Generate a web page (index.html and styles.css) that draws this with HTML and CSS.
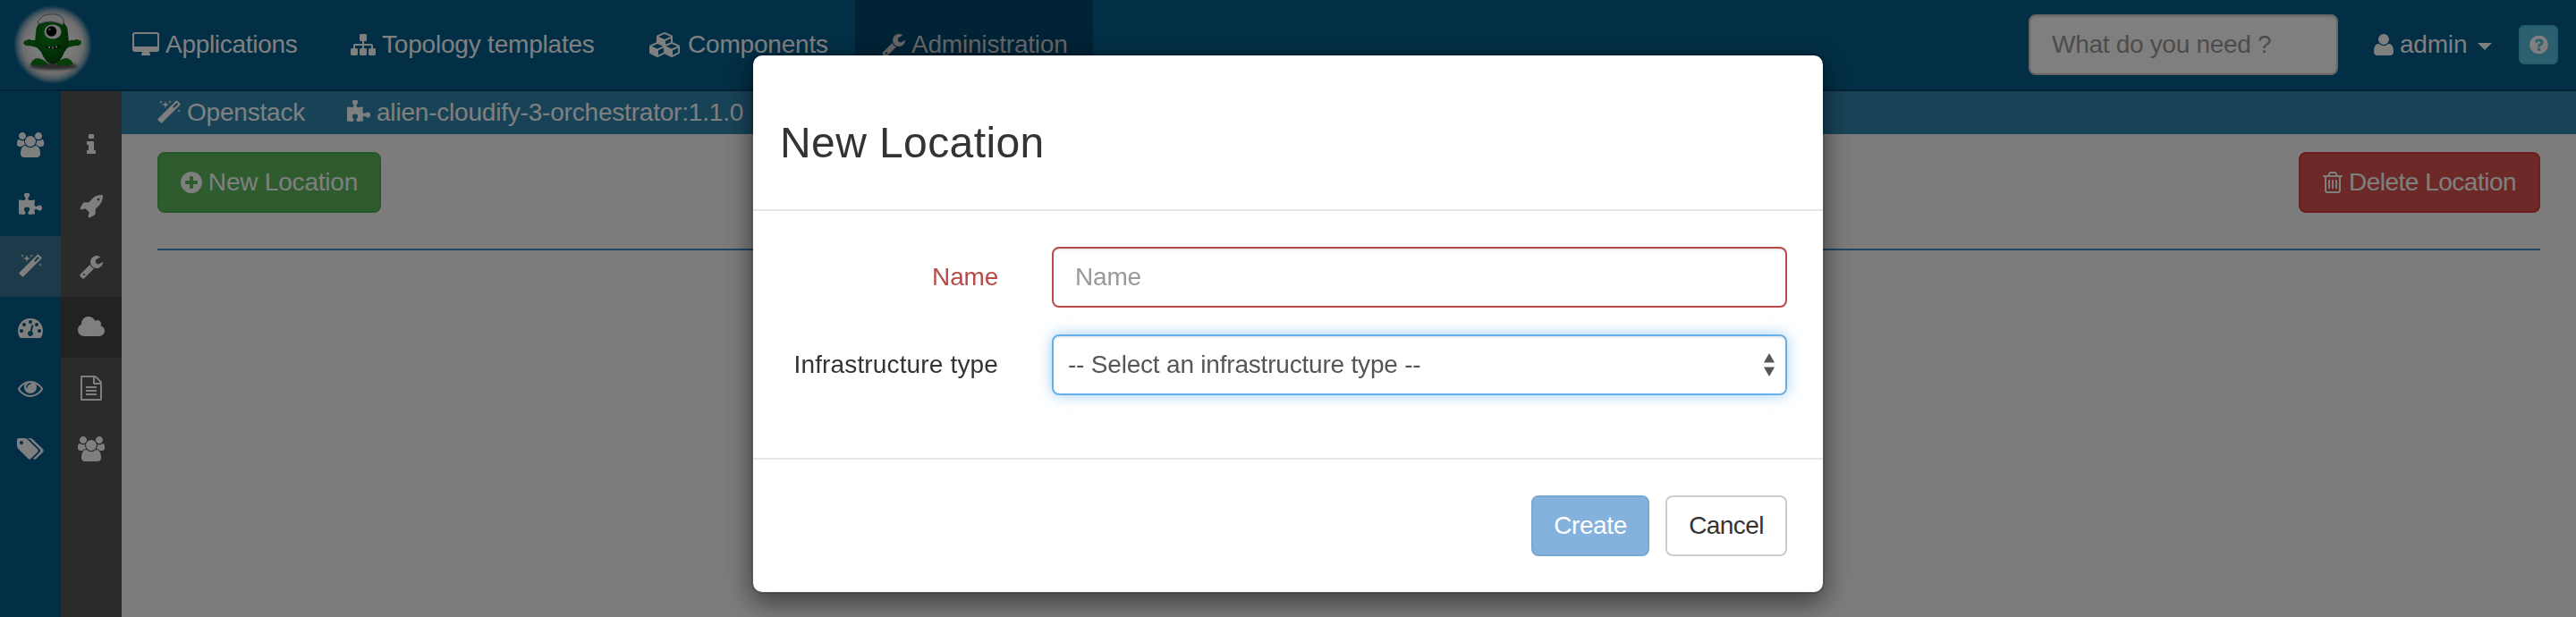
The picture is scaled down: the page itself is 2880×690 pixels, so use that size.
FILE: index.html
```html
<!DOCTYPE html>
<html lang="en">
<head>
<meta charset="utf-8">
<title>Alien 4 Cloud</title>
<link rel="stylesheet" href="styles.css">
</head>
<body>
<svg class="sprite" aria-hidden="true">
  <symbol id="i-desktop" viewBox="64 0 1920 1792"><path d="M1856 992v-832q0-13-9.500-22.500t-22.500-9.500h-1600q-13 0-22.500 9.500t-9.500 22.500v832q0 13 9.500 22.500t22.500 9.500h1600q13 0 22.500-9.500t9.500-22.500zm128-832v1088q0 66-47 113t-113 47h-544q0 37 16 77.500t32 71 16 43.500q0 26-19 45t-45 19h-512q-26 0-45-19t-19-45q0-14 16-44t32-70 16-78h-544q-66 0-113-47t-47-113v-1088q0-66 47-113t113-47h1600q66 0 113 47t47 113z"/></symbol>
  <symbol id="i-sitemap" viewBox="0 0 1792 1792"><path d="M1792 1248v320q0 40-28 68t-68 28h-320q-40 0-68-28t-28-68v-320q0-40 28-68t68-28h96v-192h-512v192h96q40 0 68 28t28 68v320q0 40-28 68t-68 28h-320q-40 0-68-28t-28-68v-320q0-40 28-68t68-28h96v-192h-512v192h96q40 0 68 28t28 68v320q0 40-28 68t-68 28h-320q-40 0-68-28t-28-68v-320q0-40 28-68t68-28h96v-192q0-52 38-90t90-38h512v-192h-96q-40 0-68-28t-28-68v-320q0-40 28-68t68-28h320q40 0 68 28t28 68v320q0 40-28 68t-68 28h-96v192h512q52 0 90 38t38 90v192h96q40 0 68 28t28 68z"/></symbol>
  <symbol id="i-cubes" viewBox="0 0 2304 1792"><path d="M640 1632l384-192v-314l-384 164v342zm-64-454l404-173-404-173-404 173zm1088 454l384-192v-314l-384 164v342zm-64-454l404-173-404-173-404 173zm-448-293l384-165v-266l-384 164v267zm-64-379l441-189-441-189-441 189zm1088 518v416q0 36-19 67t-52 47l-448 224q-25 14-57 14t-57-14l-448-224q-4-2-7-4-2 2-7 4l-448 224q-25 14-57 14t-57-14l-448-224q-33-16-52-47t-19-67v-416q0-38 21.500-70t56.500-48l434-186v-400q0-38 21.500-70t56.500-48l448-192q23-10 50-10t50 10l448 192q35 16 56.500 48t21.500 70v400l434 186q36 16 57 48t21 70z"/></symbol>
  <symbol id="i-wrench" viewBox="64 0 1664 1792"><path d="M448 1472q0-26-19-45t-45-19-45 19-19 45 19 45 45 19 45-19 19-45zm644-420l-682 682q-37 37-90 37-52 0-91-37l-106-108q-38-36-38-90 0-53 38-91l681-681q39 98 114.500 173.500t173.500 114.500zm634-435q0 39-23 106-47 134-164.500 217.500t-258.500 83.500q-185 0-316.500-131.500t-131.500-316.500 131.500-316.500 316.500-131.500q58 0 121.500 16.500t107.500 46.500q16 11 16 28t-16 28l-293 169v224l193 107q5-3 79-48.500t135.500-81 70.500-35.500q15 0 23.500 10t8.500 25z"/></symbol>
  <symbol id="i-magic" viewBox="64 0 1664 1792"><path d="M1254 581l293-293-107-107-293 293zm447-293q0 27-18 45l-1286 1286q-18 18-45 18t-45-18l-198-198q-18-18-18-45t18-45l1286-1286q18-18 45-18t45 18l198 198q18 18 18 45zm-1351-190l98 30-98 30-30 98-30-98-98-30 98-30 30-98zm350 162l196 60-196 60-60 196-60-196-196-60 196-60 60-196zm930 478l98 30-98 30-30 98-30-98-98-30 98-30 30-98zm-640-640l98 30-98 30-30 98-30-98-98-30 98-30 30-98z"/></symbol>
  <symbol id="i-puzzle" viewBox="90 0 1664 1792"><path d="M1755 1060q0 81-44.500 135t-123.500 54q-41 0-77.500-17.500t-59-38-56.500-38-71-17.500q-110 0-110 124 0 39 16 115t15 115v5q-22 0-33 1-34 3-97.500 11.500t-115.500 13.500-98 5q-61 0-103-26.500t-42-83.500q0-37 17.500-71t38-56.500 38-59 17.500-77.500q0-79-54-123.500t-135-44.500q-84 0-143 45.500t-59 127.500q0 43 15 83t33.500 64.500 33.500 53 15 50.500q0 45-46 89-37 35-117 35-95 0-245-24-9-2-27.500-4t-27.500-4l-13-2q-1 0-3-1-2 0-2-1v-1024q2 1 17.500 3.500t34 5 21.500 3.500q150 24 245 24 80 0 117-35 46-44 46-89 0-22-15-50.500t-33.500-53-33.500-64.500-15-83q0-82 59-127.500t144-45.500q80 0 134 44.500t54 123.500q0 41-17.500 77.500t-38 59-38 56.500-17.500 71q0 57 42 83.500t103 26.500q64 0 180-15t163-17v2q-1 2-3.500 17.500t-5 34-3.500 21.500q-24 150-24 245 0 80 35 117 44 46 89 46 22 0 50.500-15t53-33.500 64.500-33.500 83-15q82 0 127.500 59t45.500 143z"/></symbol>
  <symbol id="i-user" viewBox="192 0 1408 1792"><path d="M1600 1405q0 120-73 189.500t-194 69.500h-874q-121 0-194-69.500t-73-189.500q0-53 3.500-103.500t14-109 26.500-108.500 43-97.500 62-81 85.500-53.500 111.500-20q9 0 42 21.500t74.500 48 108 48 133.500 21.500 133.500-21.500 108-48 74.500-48 42-21.500q61 0 111.500 20t85.500 53.500 62 81 43 97.500 26.500 108.500 14 109 3.500 103.500zm-320-893q0 159-112.500 271.500t-271.500 112.500-271.500-112.500-112.500-271.500 112.500-271.500 271.500-112.500 271.500 112.500 112.500 271.500z"/></symbol>
  <symbol id="i-question" viewBox="128 0 1536 1792"><path d="M1024 1376v-192q0-14-9-23t-23-9h-192q-14 0-23 9t-9 23v192q0 14 9 23t23 9h192q14 0 23-9t9-23zm256-672q0-88-55.500-163t-138.500-116-170-41q-243 0-371 213-15 24 8 42l132 100q7 6 19 6 16 0 25-12 53-68 86-92 34-24 86-24 48 0 85.500 26t37.500 59q0 38-20 61t-68 45q-63 28-115.500 86.500t-52.500 125.500v36q0 14 9 23t23 9h192q14 0 23-9t9-23q0-19 21.500-49.500t54.500-49.500q32-18 49-28.500t46-35 44.500-48 28-60.500 12.500-81zm384 192q0 209-103 385.500t-279.500 279.500-385.500 103-385.500-103-279.500-279.500-103-385.500 103-385.500 279.500-279.500 385.500-103 385.500 103 279.500 279.500 103 385.500z"/></symbol>
  <symbol id="i-plus" viewBox="128 0 1536 1792"><path d="M1344 960v-128q0-26-19-45t-45-19h-256v-256q0-26-19-45t-45-19h-128q-26 0-45 19t-19 45v256h-256q-26 0-45 19t-19 45v128q0 26 19 45t45 19h256v256q0 26 19 45t45 19h128q26 0 45-19t19-45v-256h256q26 0 45-19t19-45zm320-64q0 209-103 385.500t-279.500 279.500-385.500 103-385.500-103-279.500-279.500-103-385.500 103-385.500 279.500-279.500 385.500-103 385.500 103 279.500 279.500 103 385.500z"/></symbol>
  <symbol id="i-trash" viewBox="192 0 1408 1792"><path d="M704 736v576q0 14-9 23t-23 9h-64q-14 0-23-9t-9-23v-576q0-14 9-23t23-9h64q14 0 23 9t9 23zm256 0v576q0 14-9 23t-23 9h-64q-14 0-23-9t-9-23v-576q0-14 9-23t23-9h64q14 0 23 9t9 23zm256 0v576q0 14-9 23t-23 9h-64q-14 0-23-9t-9-23v-576q0-14 9-23t23-9h64q14 0 23 9t9 23zm128 724v-948h-896v948q0 22 7 40.500t14.500 27 10.500 8.500h832q3 0 10.500-8.500t14.500-27 7-40.500zm-672-1076h448l-48-117q-7-9-17-11h-317q-10 2-17 11zm928 32v64q0 14-9 23t-23 9h-96v948q0 83-47 143.500t-113 60.500h-832q-66 0-113-58.500t-47-141.500v-952h-96q-14 0-23-9t-9-23v-64q0-14 9-23t23-9h309l70-167q15-37 54-63t79-26h320q40 0 79 26t54 63l70 167h309q14 0 23 9t9 23z"/></symbol>
  <symbol id="i-users" viewBox="-64 0 1920 1792"><path d="M529 896q-162 5-265 128h-134q-82 0-138-40.500t-56-118.500q0-353 124-353 6 0 43.500 21t97.500 42.500 119 21.500q67 0 133-23-5 37-5 66 0 159 93 256zm1071 637q0 120-73 189.500t-194 69.500h-874q-121 0-194-69.500t-73-189.500q0-53 3.500-103.500t14-109 26.500-108.500 43-97.500 62-81 85.500-53.500 111.500-20q10 0 43 21.500t73 48 107 48 135 21.500 135-21.500 107-48 73-48 43-21.500q61 0 111.500 20t85.500 53.500 62 81 43 97.500 26.500 108.500 14 109 3.500 103.500zm-1024-1277q0 106-75 181t-181 75-181-75-75-181 75-181 181-75 181 75 75 181zm704 384q0 159-112.500 271.500t-271.500 112.500-271.500-112.500-112.500-271.500 112.500-271.500 271.500-112.500 271.500 112.500 112.500 271.500zm576 225q0 78-56 118.500t-138 40.500h-134q-103-123-265-128 93-97 93-256 0-29-5-66 66 23 133 23 59 0 119-21.500t97.500-42.500 43.500-21q124 0 124 353zm-128-609q0 106-75 181t-181 75-181-75-75-181 75-181 181-75 181 75 75 181z"/></symbol>
  <symbol id="i-gauge" viewBox="0 0 1792 1792"><path d="M384 1152q0-53-37.500-90.500t-90.500-37.500-90.500 37.500-37.500 90.500 37.500 90.500 90.500 37.500 90.500-37.500 37.500-90.500zm192-448q0-53-37.500-90.500t-90.500-37.500-90.500 37.500-37.500 90.500 37.500 90.500 90.500 37.500 90.500-37.500 37.500-90.500zm428 481l101-382q6-26-7.500-48.500t-38.500-29.500-48 6.500-30 39.500l-101 382q-60 5-107 43.500t-63 98.500q-20 77 20 146t117 89 146-20 89-117q16-60-6-117t-72-91zm660-33q0-53-37.500-90.500t-90.500-37.500-90.500 37.500-37.500 90.500 37.500 90.500 90.500 37.500 90.500-37.500 37.500-90.500zm-640-640q0-53-37.500-90.500t-90.500-37.500-90.500 37.500-37.500 90.500 37.500 90.500 90.500 37.500 90.500-37.500 37.500-90.500zm448 192q0-53-37.500-90.500t-90.500-37.500-90.500 37.500-37.500 90.500 37.500 90.500 90.500 37.500 90.500-37.500 37.500-90.500zm320 448q0 261-141 483-19 29-54 29h-1402q-35 0-54-29-141-221-141-483 0-182 71-348t191-286 286-191 348-71 348 71 286 191 191 286 71 348z"/></symbol>
  <symbol id="i-eye" viewBox="0 0 1792 1792"><path d="M1664 960q-152-236-381-353 61 104 61 225 0 185-131.500 316.500t-316.500 131.500-316.500-131.500-131.500-316.500q0-121 61-225-229 117-381 353 133 205 333.500 326.500t434.500 121.500 434.500-121.500 333.500-326.500zm-720-384q0-20-14-34t-34-14q-125 0-214.500 89.500t-89.500 214.500q0 20 14 34t34 14 34-14 14-34q0-86 61-147t147-61q20 0 34-14t14-34zm848 384q0 34-20 69-140 230-376.500 368.500t-499.500 138.500-499.500-139-376.500-368q-20-35-20-69t20-69q140-229 376.500-368t499.500-139 499.500 139 376.500 368q20 35 20 69z"/></symbol>
  <symbol id="i-tags" viewBox="0 0 1920 1792"><path d="M448 448q0-53-37.500-90.500t-90.500-37.500-90.500 37.500-37.500 90.500 37.500 90.500 90.500 37.500 90.500-37.500 37.500-90.500zm1067 576q0 53-37 90l-491 492q-39 37-91 37-53 0-90-37l-715-716q-38-37-64.500-101t-26.500-117v-416q0-52 38-90t90-38h416q53 0 117 26.500t102 64.500l715 714q37 39 37 91zm384 0q0 53-37 90l-491 492q-39 37-91 37-36 0-59-14t-53-45l470-470q37-37 37-90 0-52-37-91l-715-714q-38-38-102-64.500t-117-26.500h224q53 0 117 26.500t102 64.500l715 714q37 39 37 91z"/></symbol>
  <symbol id="i-info" viewBox="576 0 640 1792"><path d="M1216 1344v128q0 26-19 45t-45 19h-512q-26 0-45-19t-19-45v-128q0-26 19-45t45-19h64v-384h-64q-26 0-45-19t-19-45v-128q0-26 19-45t45-19h384q26 0 45 19t19 45v576h64q26 0 45 19t19 45zm-128-1152v192q0 26-19 45t-45 19h-256q-26 0-45-19t-19-45v-192q0-26 19-45t45-19h256q26 0 45 19t19 45z"/></symbol>
  <symbol id="i-rocket" viewBox="0 0 1664 1792"><path d="M1440 448q0-40-28-68t-68-28-68 28-28 68 28 68 68 28 68-28 28-68zm224-288q0 249-75.500 430.500t-253.500 360.500q-81 80-195 176l-20 379q-2 16-16 26l-384 224q-7 4-16 4-12 0-23-9l-64-64q-13-14-8-32l85-276-281-281-276 85q-3 1-9 1-14 0-23-9l-64-64q-17-19-5-39l224-384q10-14 26-16l379-20q96-114 176-195 188-187 358-258t431-71q14 0 24 9.500t10 22.500z"/></symbol>
  <symbol id="i-cloud" viewBox="64 0 1920 1792"><path d="M1984 1152q0 159-112.500 271.500t-271.500 112.500h-1088q-185 0-316.500-131.500t-131.500-316.500q0-132 71-241.500t187-163.500q-2-28-2-43 0-212 150-362t362-150q158 0 286.500 88t187.500 230q70-62 166-62 106 0 181 75t75 181q0 75-41 138 129 30 213 134.500t84 239.500z"/></symbol>
  <symbol id="i-file" viewBox="128 0 1536 1792"><path d="M1596 380q28 28 48 76t20 88v1152q0 40-28 68t-68 28h-1344q-40 0-68-28t-28-68v-1600q0-40 28-68t68-28h896q40 0 88 20t76 48zm-444-244v376h376q-10-29-22-41l-313-313q-12-12-41-22zm384 1528v-1024h-416q-40 0-68-28t-28-68v-416h-768v1536h1280zm-1024-864q0-14 9-23t23-9h704q14 0 23 9t9 23v64q0 14-9 23t-23 9h-704q-14 0-23-9t-9-23v-64zm736 224q14 0 23 9t9 23v64q0 14-9 23t-23 9h-704q-14 0-23-9t-9-23v-64q0-14 9-23t23-9h704zm0 256q14 0 23 9t9 23v64q0 14-9 23t-23 9h-704q-14 0-23-9t-9-23v-64q0-14 9-23t23-9h704z"/></symbol>
</svg>

<header class="navbar">
  <a class="brand">
    <svg width="90" height="90" viewBox="0 0 90 90">
      <defs>
        <radialGradient id="glow">
          <stop offset="0" stop-color="#fff"/>
          <stop offset=".5" stop-color="#f4f4f4"/>
          <stop offset=".76" stop-color="#dcdcdc"/>
          <stop offset=".88" stop-color="#d0d4d8" stop-opacity=".65"/>
          <stop offset="1" stop-color="#c0ccd4" stop-opacity="0"/>
        </radialGradient>
        <radialGradient id="skin" cx=".4" cy=".3" r=".75">
          <stop offset="0" stop-color="#0a8a14"/>
          <stop offset=".6" stop-color="#06640c"/>
          <stop offset="1" stop-color="#034208"/>
        </radialGradient>
        <filter id="soft" x="-20%" y="-100%" width="140%" height="300%"><feGaussianBlur stdDeviation="1.600"/></filter>
      </defs>
      <circle cx="45" cy="45" r="44" fill="url(#glow)"/>
      <ellipse cx="46" cy="69" rx="27" ry="4" fill="#555" filter="url(#soft)"/>
      <path d="M20 67q2-6 8-7 7 1 11 6l-1 2H21zM68 67q-2-6-8-7-7 1-11 6l1 2h13z" fill="#0c7c16"/>
      <path d="M29 44q-3-5-8-4-3-2-5 0-3 0-4 3 2 4 7 3 6 1 12 4zM60 44q3-5 9-4 3-2 5 0 3 0 3 3-2 4-7 3-6 1-12 4z" fill="#0a7212"/>
      <path d="M26 32q0-11 8-13 10-3 20 0 8 3 8 13l1 10q-1 7-5 11-4 12-13 14-9-2-13-14-5-4-7-11z" fill="url(#skin)"/>
      <path d="M29 22q-2-4 2-6 3-5 12-5 11-1 14 6 1 3-1 6-12-7-27-1z" fill="#e4e4e4" stroke="#6a7890" stroke-width="1"/>
      <ellipse cx="45" cy="30.500" rx="9.500" ry="8" fill="#f0f0f0"/>
      <circle cx="43.500" cy="30" r="5.800" fill="#000"/>
      <circle cx="41.500" cy="28" r="1.200" fill="#999"/>
      <path d="M36 46q9 3 18-1-1 5-8.500 5-8.500 0-9.500-4z" fill="#012503"/>
      <path d="M40 47h2v2h-2zM44 47.500h2v2h-2zM48 46.500h2v2h-2z" fill="#ccc"/>
    </svg>
  </a>
  <nav class="menu">
    <a class="menu-item menu-item--apps"><svg class="icon w30"><use href="#i-desktop"/></svg><span>Applications</span></a>
    <a class="menu-item menu-item--topo"><svg class="icon w28"><use href="#i-sitemap"/></svg><span>Topology templates</span></a>
    <a class="menu-item menu-item--comp"><svg class="icon w36"><use href="#i-cubes"/></svg><span>Components</span></a>
    <a class="menu-item menu-item--admin"><svg class="icon w26"><use href="#i-wrench"/></svg><span>Administration</span></a>
  </nav>
  <input class="control search" type="text" placeholder="What do you need ?">
  <a class="account"><svg class="icon w22"><use href="#i-user"/></svg><span>admin</span><i class="caret"></i></a>
  <button class="help"><svg class="help-icon"><use href="#i-question"/></svg></button>
</header>

<div class="page">
  <aside class="side side--main">
    <a class="side-item"><svg class="icon w30"><use href="#i-users"/></svg></a>
    <a class="side-item"><svg class="icon w26"><use href="#i-puzzle"/></svg></a>
    <a class="side-item side-item--on"><svg class="icon w26"><use href="#i-magic"/></svg></a>
    <a class="side-item"><svg class="icon w28"><use href="#i-gauge"/></svg></a>
    <a class="side-item"><svg class="icon w28"><use href="#i-eye"/></svg></a>
    <a class="side-item"><svg class="icon w30"><use href="#i-tags"/></svg></a>
  </aside>
  <aside class="side side--sub">
    <a class="side-item"><svg class="icon w10"><use href="#i-info"/></svg></a>
    <a class="side-item"><svg class="icon w26"><use href="#i-rocket"/></svg></a>
    <a class="side-item"><svg class="icon w26"><use href="#i-wrench"/></svg></a>
    <a class="side-item side-item--on"><svg class="icon w30"><use href="#i-cloud"/></svg></a>
    <a class="side-item"><svg class="icon w24"><use href="#i-file"/></svg></a>
    <a class="side-item"><svg class="icon w30"><use href="#i-users"/></svg></a>
  </aside>
  <main class="main">
    <div class="crumbs">
      <a class="crumb crumb--first"><svg class="icon w26"><use href="#i-magic"/></svg><span>Openstack</span></a>
      <a class="crumb"><svg class="icon w26"><use href="#i-puzzle"/></svg><span>alien-cloudify-3-orchestrator:1.1.0</span></a>
    </div>
    <div class="toolbar">
      <button class="btn btn--success"><svg class="icon w24"><use href="#i-plus"/></svg><span>New Location</span></button>
      <button class="btn btn--danger"><svg class="icon w22"><use href="#i-trash"/></svg><span>Delete Location</span></button>
    </div>
  </main>
</div>

<div class="backdrop">
  <form class="modal">
    <div class="modal-head"><h3 class="modal-title">New Location</h3></div>
    <div class="modal-body">
      <label class="label label--error" for="name">Name</label>
      <input class="control control--error" id="name" type="text" placeholder="Name">
      <label class="label" for="infra">Infrastructure type</label>
      <div class="control control--focus" id="infra">
        <span class="select-value">-- Select an infrastructure type --</span>
        <svg class="arrows" viewBox="0 0 12 26"><path d="M6 0l6 10.500H0zM6 26l6-10.500H0z"/></svg>
      </div>
    </div>
    <div class="modal-foot">
      <button class="btn btn--primary" type="button">Create</button>
      <button class="btn btn--default" type="button">Cancel</button>
    </div>
  </form>
</div>
</body>
</html>
```
FILE: styles.css
```css
* {
  box-sizing: border-box;
}

body {
  margin: 0;
  height: 690px;
  overflow: hidden;
  display: flex;
  flex-direction: column;
  background: #f8f8f8;
  color: #333;
  font: 28px/40px "Liberation Sans", Arial, sans-serif;
  letter-spacing: -0.2px;
}

input,
button {
  font: inherit;
  letter-spacing: inherit;
}

.sprite {
  position: absolute;
  width: 0;
  height: 0;
}

.icon {
  flex: none;
  height: 28px;
  fill: currentColor;
}

.w10 { width: 10px; }
.w22 { width: 22px; }
.w24 { width: 24px; }
.w26 { width: 26px; }
.w28 { width: 28px; }
.w30 { width: 30px; }
.w36 { width: 36px; }

/* top bar */
.navbar {
  flex: none;
  display: flex;
  align-items: center;
  height: 102px;
  padding-right: 20px;
  border-bottom: 2px solid #004466;
  background: #045e8c;
  color: #fff;
}

.brand {
  width: 118px;
  height: 90px;
  padding-left: 14px;
}

.menu {
  display: flex;
  flex: 1;
  height: 100px;
}

.menu-item {
  display: flex;
  align-items: center;
  gap: 7px;
  padding-left: 30px;
  white-space: nowrap;
}

.menu-item--apps {
  width: 244px;
  letter-spacing: -0.3px;
}

.menu-item--topo { width: 334px; }
.menu-item--comp { width: 260px; }

.menu-item--admin {
  width: 266px;
  background: #00466c;
  color: #ccc;
}

.account {
  display: flex;
  align-items: center;
  gap: 7px;
  width: 202px;
  padding-left: 40px;
}

.caret {
  margin: 4px 0 0 5px;
  border: 8px solid transparent;
  border-top-color: currentColor;
  border-bottom: 0;
}

.help {
  display: flex;
  align-items: center;
  justify-content: center;
  width: 44px;
  height: 44px;
  padding: 0;
  border: 2px solid #46b8da;
  border-radius: 6px;
  background: #5bc0de;
  color: #fff;
}

.help-icon {
  width: 21px;
  height: 24px;
  fill: currentColor;
}

/* form controls */
.control {
  display: flex;
  align-items: center;
  height: 68px;
  padding: 0 24px;
  border: 2px solid #ccc;
  border-radius: 8px;
  background: #fff;
  box-shadow: inset 0 2px 2px rgba(0, 0, 0, .075);
  color: #555;
  outline: 0;
}

.control::placeholder {
  color: #999;
  opacity: 1;
}

.search {
  width: 346px;
  letter-spacing: -0.3px;
}

.control--error {
  border-color: #b94a48;
}

.control--focus {
  padding: 0 12px 0 16px;
  border-color: #66afe9;
  box-shadow: inset 0 2px 2px rgba(0, 0, 0, .075), 0 0 16px rgba(102, 175, 233, .6);
}

.select-value {
  flex: 1;
}

.arrows {
  width: 12px;
  height: 26px;
  fill: #555;
}

/* side menus */
.page {
  flex: 1;
  display: flex;
}

.side {
  flex: none;
  width: 68px;
  padding-top: 26px;
  color: #fff;
}

.side--main { background: #045e8c; }
.side--sub { background: #575757; }

.side-item {
  display: flex;
  align-items: center;
  justify-content: center;
  height: 68px;
  border-bottom: 1px solid rgba(0, 0, 0, .06);
  padding-top: 1px;
}

.side--main .side-item--on { background: #387494; }
.side--sub .side-item--on { background: #444; }

/* content */
.main {
  flex: 1;
}

.crumbs {
  display: flex;
  align-items: center;
  height: 48px;
  padding: 0 0 0 40px;
  background: #3187af;
  color: #fff;
}

.crumb {
  display: flex;
  align-items: center;
  gap: 7px;
}

.crumb--first {
  width: 212px;
}

.toolbar {
  display: flex;
  justify-content: space-between;
  height: 110px;
  margin: 20px 40px 0;
  border-bottom: 2px solid #428bca;
}

.btn {
  display: flex;
  align-items: center;
  justify-content: center;
  gap: 7px;
  height: 68px;
  padding: 0;
  border: 2px solid transparent;
  border-radius: 8px;
  white-space: nowrap;
  color: #fff;
}

.btn--success {
  width: 250px;
  border-color: #4cae4c;
  background: #5cb85c;
}

.btn--danger {
  width: 270px;
  border-color: #d43f3a;
  background: #d9534f;
  letter-spacing: -0.5px;
}

.btn--primary {
  width: 132px;
  border-color: #78a9d5;
  background: #85b2dc;
  letter-spacing: -0.4px;
}

.btn--default {
  width: 136px;
  border-color: #ccc;
  background: #fff;
  color: #333;
  letter-spacing: -0.6px;
}

/* dialog */
.backdrop {
  position: fixed;
  inset: 0;
  display: flex;
  justify-content: center;
  align-items: flex-start;
  padding-top: 60px;
  background: rgba(0, 0, 0, .5);
}

.modal {
  width: 1200px;
  height: 604px;
  border: 2px solid rgba(0, 0, 0, .2);
  border-radius: 12px;
  background: #fff;
  background-clip: padding-box;
  box-shadow: 0 10px 30px rgba(0, 0, 0, .5);
}

.modal-head {
  display: flex;
  align-items: center;
  height: 174px;
  padding: 23px 30px 0;
  border-bottom: 2px solid #e5e5e5;
}

.modal-title {
  margin: 0;
  font-size: 48px;
  font-weight: 400;
  letter-spacing: .4px;
}

.modal-body {
  display: grid;
  grid-template-columns: 274px 822px;
  column-gap: 60px;
  row-gap: 30px;
  align-content: start;
  align-items: center;
  height: 276px;
  padding-top: 40px;
}

.label {
  text-align: right;
  letter-spacing: .15px;
}

.label--error {
  color: #b94a48;
  letter-spacing: -0.2px;
}

.modal-foot {
  display: flex;
  justify-content: flex-end;
  gap: 18px;
  height: 150px;
  padding: 40px 40px 0;
  border-top: 2px solid #e5e5e5;
}
```
